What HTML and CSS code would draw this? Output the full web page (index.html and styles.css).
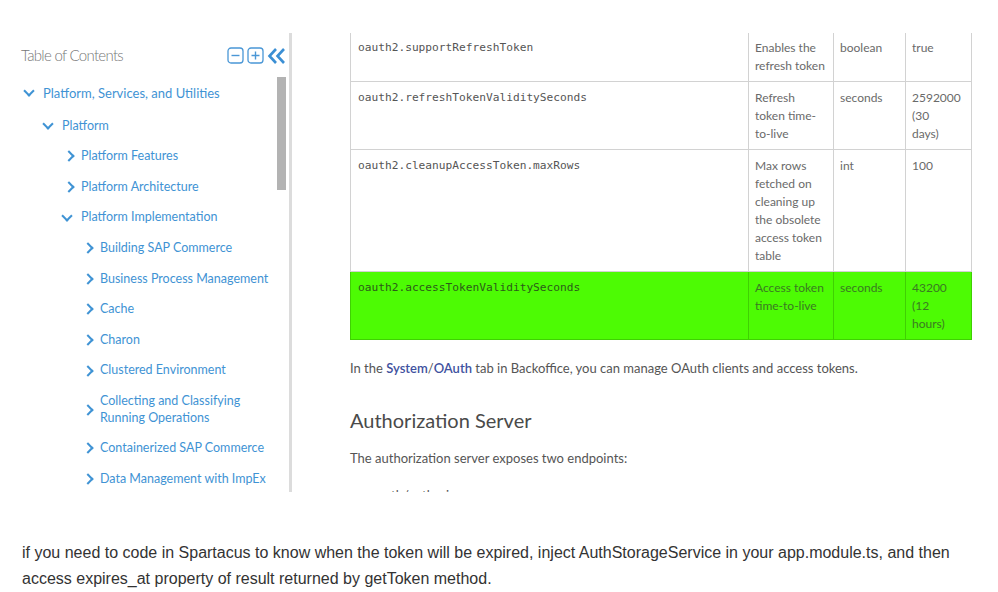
FILE: index.html
```html
<!DOCTYPE html>
<html>
<head>
<meta charset="utf-8">
<link rel="stylesheet" href="styles.css">
</head>
<body>
<div class="shot">
  <aside class="toc">
    <div class="toc-head">
      <span class="toc-title">Table of Contents</span>
      <span class="toc-tools">
        <svg class="tool" width="17" height="17" viewBox="0 0 17 17"><rect x="1" y="1" width="15" height="15" rx="3" fill="none" stroke="#4a97d6" stroke-width="1.3"/><path d="M4.5 8.5h8" stroke="#4a97d6" stroke-width="1.4"/></svg>
        <svg class="tool" width="17" height="17" viewBox="0 0 17 17"><rect x="1" y="1" width="15" height="15" rx="3" fill="none" stroke="#4a97d6" stroke-width="1.3"/><path d="M4.5 8.5h8M8.5 4.5v8" stroke="#4a97d6" stroke-width="1.4"/></svg>
        <svg class="tool" width="20" height="18" viewBox="0 0 20 18"><path d="M9 2L2.5 9L9 16M17 2L10.5 9L17 16" fill="none" stroke="#3b8fd4" stroke-width="2.6"/></svg>
      </span>
    </div>
    <ul class="tree">
      <li class="node l1 open"><span class="chev"></span><span class="lbl">Platform, Services, and Utilities</span></li>
      <li class="node l2 open"><span class="chev"></span><span class="lbl">Platform</span></li>
      <li class="node l3"><span class="chev"></span><span class="lbl">Platform Features</span></li>
      <li class="node l3"><span class="chev"></span><span class="lbl">Platform Architecture</span></li>
      <li class="node l3 open"><span class="chev"></span><span class="lbl">Platform Implementation</span></li>
      <li class="node l4"><span class="chev"></span><span class="lbl">Building SAP Commerce</span></li>
      <li class="node l4"><span class="chev"></span><span class="lbl">Business Process Management</span></li>
      <li class="node l4"><span class="chev"></span><span class="lbl">Cache</span></li>
      <li class="node l4"><span class="chev"></span><span class="lbl">Charon</span></li>
      <li class="node l4"><span class="chev"></span><span class="lbl">Clustered Environment</span></li>
      <li class="node l4"><span class="chev"></span><span class="lbl">Collecting and Classifying<br>Running Operations</span></li>
      <li class="node l4"><span class="chev"></span><span class="lbl">Containerized SAP Commerce</span></li>
      <li class="node l4"><span class="chev"></span><span class="lbl">Data Management with ImpEx</span></li>
      <li class="node l4"><span class="chev"></span><span class="lbl">Data Model</span></li>
    </ul>
    <div class="scroll-thumb"></div>
  </aside>
  <main class="doc">
    <table class="props">
      <colgroup><col class="c1"><col class="c2"><col class="c3"><col class="c4"></colgroup>
      <tr>
        <td class="code">oauth2.supportRefreshToken</td>
        <td>Enables the refresh token</td>
        <td>boolean</td>
        <td class="val">true</td>
      </tr>
      <tr>
        <td class="code">oauth2.refreshTokenValiditySeconds</td>
        <td>Refresh token time-to-live</td>
        <td>seconds</td>
        <td class="val">2592000 (30 days)</td>
      </tr>
      <tr>
        <td class="code">oauth2.cleanupAccessToken.maxRows</td>
        <td>Max rows fetched on cleaning up the obsolete access token table</td>
        <td>int</td>
        <td class="val">100</td>
      </tr>
      <tr class="hl">
        <td class="code">oauth2.accessTokenValiditySeconds</td>
        <td>Access token time-to-live</td>
        <td>seconds</td>
        <td class="val">43200 (12 hours)</td>
      </tr>
    </table>
    <p class="para">In the <a class="ui">System</a>/<a class="ui">OAuth</a> tab in Backoffice, you can manage OAuth clients and access tokens.</p>
    <h2 class="sub">Authorization Server</h2>
    <p class="para">The authorization server exposes two endpoints:</p>
    <ul class="endpoints">
      <li>oauth/authorize</li>
    </ul>
  </main>
</div>
<p class="post">if you need to code in Spartacus to know when the token will be expired, inject AuthStorageService in your app.module.ts, and then access expires_at property of result returned by getToken method.</p>
</body>
</html>
```
FILE: styles.css
```css
html, body {
  margin: 0;
  padding: 0;
  background: #fff;
}

.shot {
  display: flex;
  margin-top: 33px;
  height: 459px;
  overflow: hidden;
  font-family: Lato, "Open Sans", sans-serif;
}

.toc {
  position: relative;
  width: 289px;
  flex: none;
  border-right: 3px solid #dcdcdc;
  overflow: hidden;
}

.toc-head {
  display: flex;
  align-items: center;
  justify-content: space-between;
  padding: 13px 2px 0 21px;
  height: 18px;
}

.toc-title {
  font-family: Lato, sans-serif;
  font-weight: 300;
  font-size: 15px;
  color: #777;
  letter-spacing: -0.7px;
}

.toc-tools {
  display: flex;
  align-items: center;
  gap: 3px;
  margin-top: 1px;
}

.tool { display: block; }

.tree {
  list-style: none;
  margin: 14px 0 0;
  padding: 0;
}

.node {
  display: flex;
  align-items: center;
  padding: 7px 0;
  line-height: 16.6px;
  font-size: 12.5px;
  color: #3f93d4;
}

.node.l1 { padding-left: 22px; padding-bottom: 9px; font-size: 13px; }
.node.l2 { padding-left: 41px; }
.node.l3 { padding-left: 60px; }
.node.l4 { padding-left: 79px; }

.chev {
  width: 21px;
  flex: none;
  height: 12px;
  position: relative;
}

.chev::before {
  content: "";
  position: absolute;
  left: 5px;
  top: 2px;
  width: 6px;
  height: 6px;
  border-right: 2px solid #3f93d4;
  border-bottom: 2px solid #3f93d4;
  transform: rotate(-45deg);
}

.node.open .chev::before {
  left: 3px;
  top: 0;
  transform: rotate(45deg);
}

.scroll-thumb {
  position: absolute;
  left: 277px;
  top: 44px;
  width: 9px;
  height: 113px;
  background: #b3b3b3;
}

.doc {
  flex: 1;
  padding-left: 58px;
  color: #555;
}

.props {
  border-collapse: collapse;
  width: 621px;
  margin-top: -2px;
  table-layout: fixed;
  font-size: 12px;
}

.c1 { width: 398px; }
.c2 { width: 85px; }
.c3 { width: 72px; }
.c4 { width: 66px; }

.props td {
  border: 1px solid #d2d2d2;
  padding: 7px 6px 6px 6px;
  line-height: 18px;
  vertical-align: top;
  color: #6a6a6a;
}

.props td.val { padding-right: 18px; }

.props td.code {
  font-family: "DejaVu Sans Mono", monospace;
  font-size: 11.2px;
  color: #555;
  padding-left: 7px;
}

.props tr.hl td {
  background: #4dfb04;
  border-color: #3fd003;
  color: #3a7a22;
}

.props tr.hl td.code { color: #2c5a1a; }

.para {
  margin: 18px 0 0;
  font-size: 13px;
  line-height: 20px;
  color: #555;
}

.ui {
  color: #3f52a0;
  font-weight: 600;
}

.sub {
  margin: 30px 0 0;
  font-size: 20px;
  font-weight: 400;
  color: #4a4a4a;
  line-height: 24px;
}

.sub + .para { margin-top: 16px; }

.endpoints {
  margin: 17px 0 0;
  padding-left: 20px;
  font-size: 13px;
  line-height: 20px;
  color: #555;
}

.post {
  margin: 48px 0 0;
  padding: 0 22px;
  font-family: "Liberation Sans", Arial, sans-serif;
  font-size: 16px;
  line-height: 26px;
  color: #333;
}
```
